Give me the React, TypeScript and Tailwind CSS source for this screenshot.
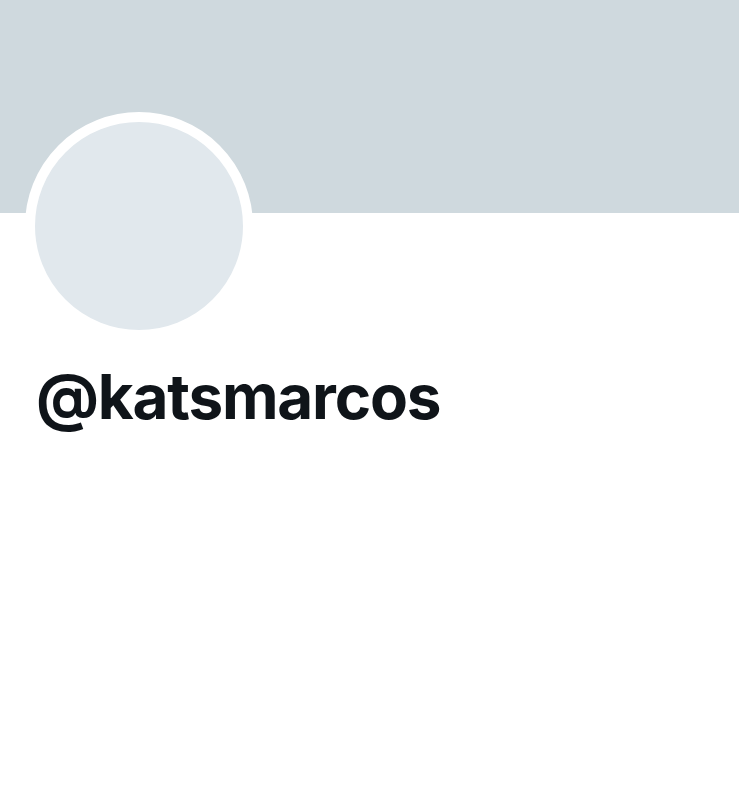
export default function App() {
  return (
    <div className="min-h-screen w-[739px] bg-white" style={{ fontFamily: 'Inter, "Liberation Sans", sans-serif' }}>
      <div className="h-[213px] bg-[#cfd9de]" />
      <div className="px-[25px]">
        <div className="-mt-[101px] h-[228px] w-[228px] rounded-full border-[10px] border-white bg-[#e1e8ed]" />
        <h1 className="mt-[17px] ml-[11px] text-[62px] font-bold leading-[80px] tracking-[-1.2px] text-[#0f1419]">
          @katsmarcos
        </h1>
      </div>
    </div>
  );
}
